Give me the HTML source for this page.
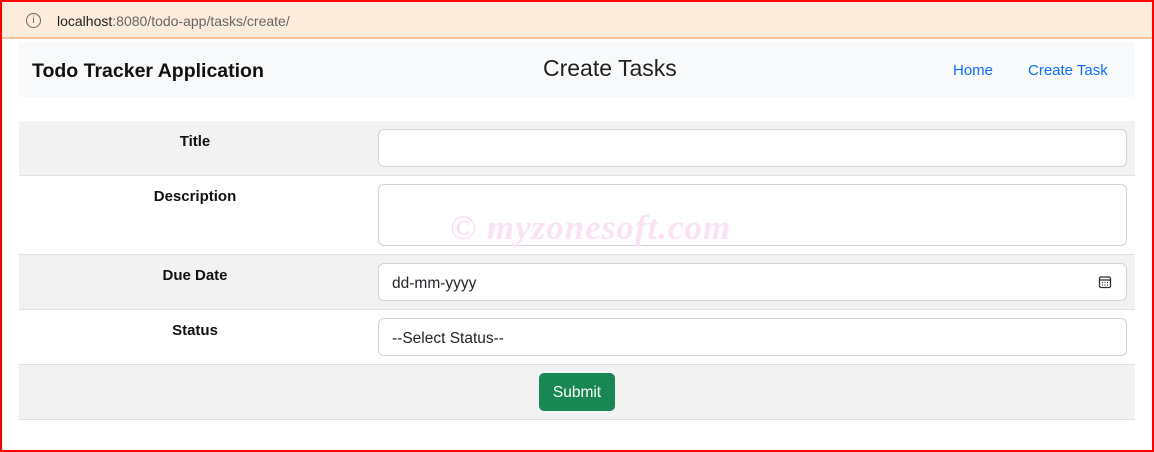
<!DOCTYPE html>
<html><head><style>
*{box-sizing:border-box;margin:0;padding:0}
body{width:1154px;height:452px;overflow:hidden;background:#fff;font-family:"Liberation Sans",sans-serif;position:relative;color:#212529}
.frame{position:absolute;inset:0;border:2px solid #f00;pointer-events:none;z-index:10}
.addr{position:absolute;left:2px;top:2px;width:1150px;height:37px;background:#fdebdb;border-bottom:2px solid #f2c49e}
.addr .i{position:absolute;left:24px;top:11px;width:15px;height:15px;border:1.3px solid #666;border-radius:50%;font-size:10px;color:#666;text-align:center;line-height:13px}
.addr .u{position:absolute;left:55px;top:11px;font-size:14px;color:#666}
.addr .u b{font-weight:normal;color:#222}
.nav{position:absolute;left:19px;top:42px;width:1116px;height:55px;background:#f8f9fa}
.brand{position:absolute;left:13px;top:18px;font-size:19.5px;font-weight:bold;color:#111}
.title{position:absolute;left:524px;top:13px;font-size:23px;color:#222}
.lk{position:absolute;top:20px;font-size:15px;color:#0d6efd}
.row{position:absolute;left:19px;width:1116px;border-bottom:1px solid #dee2e6}
.g{background:#f2f2f2}
.lab{position:absolute;left:0;width:352px;text-align:center;top:12px;font-weight:bold;font-size:15px;color:#111}
.inp{position:absolute;left:359px;width:749px;background:#fff;border:1px solid #ced4da;border-radius:6px;font-size:15.5px;color:#212529;padding-left:13px;line-height:40px}
.btn{position:absolute;left:520px;top:8px;width:76px;height:38px;background:#198754;color:#fff;border-radius:5px;font-size:15.5px;text-align:center;line-height:40px}
.wm{position:absolute;left:450px;top:208px;font-family:"Liberation Serif",serif;font-style:italic;font-size:35px;color:#f9e2f5;font-weight:bold;letter-spacing:1px}
</style></head><body>
<div class="frame"></div>
<div class="addr"><div class="i">i</div><div class="u"><b>localhost</b>:8080/todo-app/tasks/create/</div></div>
<div class="nav"><div class="brand">Todo Tracker Application</div><div class="title">Create Tasks</div>
<div class="lk" style="left:934px">Home</div><div class="lk" style="left:1009px">Create Task</div></div>
<div class="row g" style="top:121px;height:55px"><div class="lab">Title</div><div class="inp" style="top:8px;height:38px"></div></div>
<div class="row" style="top:176px;height:79px"><div class="lab">Description</div><div class="inp" style="top:8px;height:62px"></div></div>
<div class="row g" style="top:255px;height:55px"><div class="lab">Due Date</div><div class="inp" style="top:8px;height:38px">dd-mm-yyyy
<svg style="position:absolute;right:14px;top:11px" width="14" height="14" viewBox="0 0 14 14" fill="none" stroke="#333" stroke-width="1.3"><rect x="1.5" y="2" width="11" height="10.5" rx="1.5"/><line x1="1.5" y1="5" x2="12.5" y2="5"/><path d="M4 7.5h1M6.5 7.5h1M9 7.5h1M4 10h1M6.5 10h1M9 10h1"/></svg></div></div>
<div class="row" style="top:310px;height:55px"><div class="lab">Status</div><div class="inp" style="top:8px;height:38px">--Select Status--</div></div>
<div class="row g" style="top:365px;height:55px"><div class="btn">Submit</div></div>
<div class="wm">© myzonesoft.com</div>
</body></html>
